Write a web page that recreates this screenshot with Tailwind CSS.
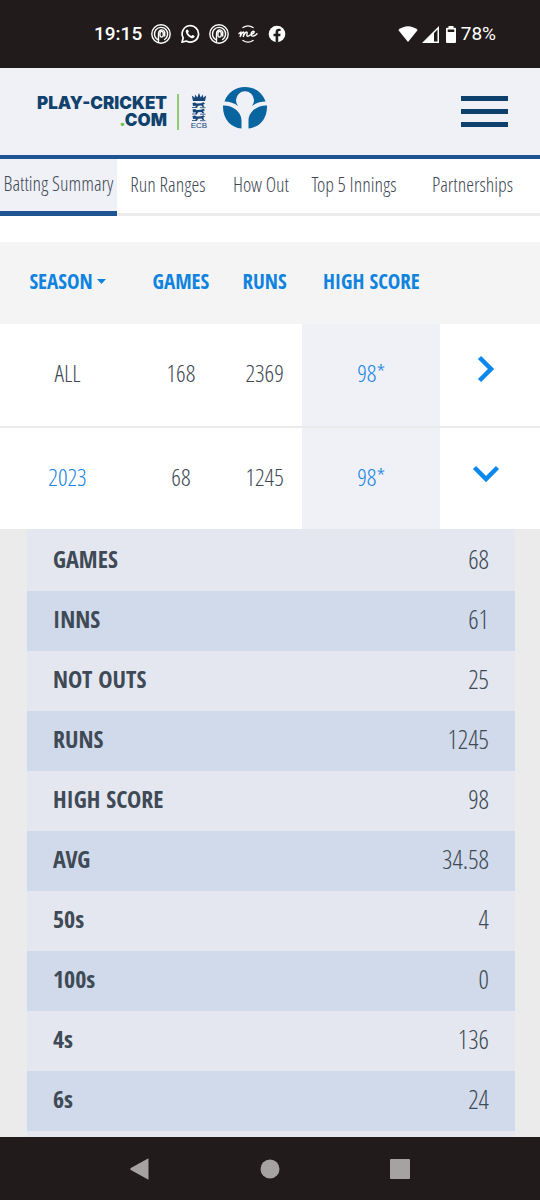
<!DOCTYPE html>
<html lang="en">
<head>
    <meta charset="UTF-8">
    <meta name="viewport" content="width=device-width, initial-scale=1.0">
    <title>Batting Summary - Play-Cricket</title>
    <script src="https://cdn.jsdelivr.net/npm/@tailwindcss/browser@4"></script>
</head>
<body class="min-h-screen flex flex-col bg-white text-[#3f4a56] font-light font-['Open_Sans_Condensed_Light','Open_Sans_Condensed',Lato,sans-serif]">

    <!-- Phone status bar -->
    <div class="h-[68px] shrink-0 bg-[#211b1b] text-white flex items-center justify-between pl-[94px] pr-11 font-normal font-['Roboto',sans-serif]">
        <div class="flex items-center gap-[9px]">
            <span class="text-[19px] font-medium">19:15</span>
            <svg class="w-5 h-5" viewBox="0 0 20 20" fill="none" stroke="currentColor" stroke-width="1.4" stroke-linecap="round">
                <circle cx="10" cy="10" r="9.2"/>
                <path d="M6.6 15.6A6.6 6.6 0 1 1 13.6 15.5"/>
                <path d="M7.5 17.5V9.5a3.3 4 0 0 1 6.2-1.5v4"/>
                <ellipse cx="10.6" cy="10.2" rx="1.7" ry="2.9"/>
            </svg>
            <svg class="w-5 h-5" viewBox="0 0 20 20">
                <path d="M2 18.2l1.2-4.3A8.2 8.2 0 1 1 6.3 17z" fill="none" stroke="currentColor" stroke-width="1.7" stroke-linejoin="round"/>
                <path d="M7.3 5.4c-.8 0-1.7.9-1.5 2.3.5 3 3.3 5.8 6.3 6.5 1.3.2 2.5-.7 2.6-1.9 0-.4-1.9-1.4-2.3-1.3-.4.1-.8 1-1.2 1-.9-.2-2.9-2-3.2-3 0-.4.8-.8.8-1.2 0-.5-.8-2.4-1.5-2.4z" fill="currentColor"/>
            </svg>
            <svg class="w-5 h-5" viewBox="0 0 20 20" fill="none" stroke="currentColor" stroke-width="1.4" stroke-linecap="round">
                <circle cx="10" cy="10" r="9.2"/>
                <path d="M6.6 15.6A6.6 6.6 0 1 1 13.6 15.5"/>
                <path d="M7.5 17.5V9.5a3.3 4 0 0 1 6.2-1.5v4"/>
                <ellipse cx="10.6" cy="10.2" rx="1.7" ry="2.9"/>
            </svg>
            <svg class="w-5 h-5" viewBox="0 0 20 20" fill="none" stroke="currentColor" stroke-width="1.4" stroke-linecap="round" stroke-linejoin="round">
                <path d="M5 3.5Q10 .2 15 3.5M5 16.5q5 3.3 10 0"/>
                <path d="M1 9.5l2-1.5-.8 4.5C3.5 9.5 5 7.5 5.8 8.2c.7.7-.3 2.8-.5 4.2C6.5 9.5 8 7.5 9 8.2c.8.7-1 3.6.2 4 1.3.4 3-1.2 4.3-2.2 1.5-.3 3-1.3 2.6-2.4-.5-1-3 .2-3 2.5 0 3 3.5 2.4 5.9-.3"/>
            </svg>
            <svg class="w-5 h-5" viewBox="0 0 20 20">
                <circle cx="10" cy="10" r="8.3" fill="currentColor"/>
                <path d="M8.6 18.5v-6.2H6.5V9.8h2.1V8c0-2.2 1.3-3.3 3.2-3.3l1.8.1V7h-1.1c-1 0-1.3.5-1.3 1.2v1.6h2.4l-.4 2.5h-2v6.2z" fill="#211b1b"/>
            </svg>
        </div>
        <div class="flex items-center gap-1">
            <svg class="w-5 h-4" viewBox="0 0 20 16" fill="currentColor"><path d="M10 16L.3 4Q10-3.5 19.7 4z"/></svg>
            <svg class="w-[17px] h-[17px]" viewBox="0 0 17 17" fill="currentColor"><path fill-rule="evenodd" d="M0 17L17 0v17zM12 7v8.5h3.5V3.5z"/></svg>
            <svg class="w-3 h-[17px] ml-[2px]" viewBox="0 0 12 17" fill="currentColor"><path fill-rule="evenodd" d="M3.5 0h5v1.7H10a1 1 0 0 1 1 1V16a1 1 0 0 1-1 1H2a1 1 0 0 1-1-1V2.7a1 1 0 0 1 1-1h1.5zM2.7 3.5V6h6.6V3.5z"/></svg>
            <span class="text-[19px]">78%</span>
        </div>
    </div>

    <header class="h-[91px] shrink-0 bg-[#eff1f7] border-b-4 border-[#1f5493] flex items-center justify-between pl-[37px] pr-8">
        <a href="#" class="flex items-center" aria-label="Play-Cricket home">
            <span class="whitespace-nowrap font-['Inter',sans-serif] font-black text-[17px] leading-[17px] text-right text-[#11426d]">PLAY-CRICKET<br><span class="text-[#6cc04a]">.</span>COM</span>
            <span class="w-[2px] h-9 bg-[#8ace6e] ml-[10px] mr-[11px]"></span>
            <!-- ECB lions -->
            <span class="flex flex-col items-center w-[18px] text-[#174577]">
                <svg class="w-4 h-[29px]" viewBox="0 0 16 29" fill="currentColor">
                    <path d="M2 8L.8 2.5l3 2.3L4 1.5l2.3 3L8 0l1.7 4.5 2.3-3 .2 3.3 3-2.3L14 8z"/>
                    <g id="lion">
                        <path d="M1.5 10l2.5-.6 1.7 1.2 4.3-.3 2.5-1 1.5 1.5-1.8.8 1 2.5-1.9-.3-.8-1.3-3.5.2-1 2.1-1.7-.2.5-1.8-2.8.2z"/>
                        <path d="M1 14.5h5M9 14.7h5.5" stroke="currentColor" stroke-width=".8"/>
                    </g>
                    <use href="#lion" y="6.5"/>
                    <use href="#lion" y="13"/>
                </svg>
                <span class="font-['Liberation_Sans',sans-serif] font-normal text-[8px] leading-[8px]">ECB</span>
            </span>
            <svg class="w-[46px] h-[44px] ml-[14px] mb-2" viewBox="0 0 46 44">
                <path d="M2.5 15.5C5.5 6.5 13.5 1 23 1s17.5 5.5 20.5 14.5c-5 0-10 1.5-13.5 4.5a9 9 0 1 0-14 0c-3.5-3-8.5-4.5-13.5-4.5z" fill="#08659f"/>
                <circle cx="23" cy="13.5" r="7.3" fill="#eff1f7"/>
                <path d="M1 19.5c9.500-.3 18.500 6 18.500 15v8C9 41.500.5 33 1 19.500zM45 19.500c-9.500-.3-18.500 6-18.500 15v8C37 41.500 45.500 33 45 19.500z" fill="#08659f"/>
            </svg>
        </a>
        <button class="flex flex-col gap-2 w-[47px]" aria-label="Menu">
            <span class="w-full h-[5px] bg-[#0d406b]"></span>
            <span class="w-full h-[5px] bg-[#0d406b]"></span>
            <span class="w-full h-[5px] bg-[#0d406b]"></span>
        </button>
    </header>

    <nav class="h-[57px] shrink-0 mb-[26px] grid grid-cols-[117fr_102fr_84fr_102fr_135fr] text-xl whitespace-nowrap text-center">
        <a href="#" class="flex items-center justify-center pb-[2px] bg-[#eff1f7] border-b-5 border-[#1f5493]">Batting Summary</a>
        <a href="#" class="flex items-center justify-center pb-[2px] border-b-3 border-[#ebebeb]">Run Ranges</a>
        <a href="#" class="flex items-center justify-center pb-[2px] border-b-3 border-[#ebebeb]">How Out</a>
        <a href="#" class="flex items-center justify-center pb-[2px] border-b-3 border-[#ebebeb]">Top 5 Innings</a>
        <a href="#" class="flex items-center justify-center pb-[2px] border-b-3 border-[#ebebeb]">Partnerships</a>
    </nav>

    <main class="flex-1 flex flex-col bg-[#ebebeb]">
        <table class="w-full table-fixed text-center text-2xl bg-white">
            <colgroup>
                <col class="w-[25%]">
                <col class="w-[17%]">
                <col class="w-[14%]">
                <col class="w-[25.5%]">
                <col>
            </colgroup>
            <thead class="font-['Open_Sans_Condensed',Lato,sans-serif]">
                <tr class="h-[82px] bg-[#f4f4f4] text-[#0f83e0] text-[21px]">
                    <th class="pb-1"><button class="inline-flex items-center gap-1 font-bold">SEASON<svg class="w-[9px] h-[5px]" viewBox="0 0 9 5" fill="currentColor"><path d="M0 0h9L4.5 5z"/></svg></button></th>
                    <th class="pb-1">GAMES</th>
                    <th class="pb-1">RUNS</th>
                    <th class="pb-1">HIGH SCORE</th>
                    <th></th>
                </tr>
            </thead>
            <tbody>
                <tr class="h-[103px] border-b-2 border-[#ebebeb]">
                    <td class="pb-1">ALL</td>
                    <td class="pb-1">168</td>
                    <td class="pb-1">2369</td>
                    <td class="pb-1 bg-[#eff1f7] text-[#1a86e3]">98*</td>
                    <td class="pr-2 pb-4"><button class="align-middle" aria-label="Show all seasons"><svg class="w-7 h-7" viewBox="0 0 28 28" fill="none" stroke="#0b87ee" stroke-width="4.5"><path d="M7.5 2.5L19 14 7.5 25.5"/></svg></button></td>
                </tr>
                <tr class="h-[102px]">
                    <td class="pb-1 text-[#1a86e3]">2023</td>
                    <td class="pb-1">68</td>
                    <td class="pb-1">1245</td>
                    <td class="pb-1 bg-[#eff1f7] text-[#1a86e3]">98*</td>
                    <td class="pr-2 pb-4"><button class="align-middle" aria-label="Hide 2023"><svg class="w-7 h-7" viewBox="0 0 28 28" fill="none" stroke="#0b87ee" stroke-width="4.5"><path d="M2.5 8.5L14 20 25.5 8.5"/></svg></button></td>
                </tr>
            </tbody>
        </table>

        <!-- 2023 details -->
        <div class="flex-1 ml-[27px] mr-[25px] pt-[2px] bg-[#e4e7f0]">
            <table class="w-full text-[26px]">
                <tbody>
                    <tr class="h-[60px]">
                        <th class="pl-[26px] pb-1 text-left text-2xl font-['Open_Sans_Condensed',Lato,sans-serif]">GAMES</th>
                        <td class="pr-[26px] pb-1 text-right">68</td>
                    </tr>
                    <tr class="h-[60px] bg-[#d0daea]">
                        <th class="pl-[26px] pb-1 text-left text-2xl font-['Open_Sans_Condensed',Lato,sans-serif]">INNS</th>
                        <td class="pr-[26px] pb-1 text-right">61</td>
                    </tr>
                    <tr class="h-[60px]">
                        <th class="pl-[26px] pb-1 text-left text-2xl font-['Open_Sans_Condensed',Lato,sans-serif]">NOT OUTS</th>
                        <td class="pr-[26px] pb-1 text-right">25</td>
                    </tr>
                    <tr class="h-[60px] bg-[#d0daea]">
                        <th class="pl-[26px] pb-1 text-left text-2xl font-['Open_Sans_Condensed',Lato,sans-serif]">RUNS</th>
                        <td class="pr-[26px] pb-1 text-right">1245</td>
                    </tr>
                    <tr class="h-[60px]">
                        <th class="pl-[26px] pb-1 text-left text-2xl font-['Open_Sans_Condensed',Lato,sans-serif]">HIGH SCORE</th>
                        <td class="pr-[26px] pb-1 text-right">98</td>
                    </tr>
                    <tr class="h-[60px] bg-[#d0daea]">
                        <th class="pl-[26px] pb-1 text-left text-2xl font-['Open_Sans_Condensed',Lato,sans-serif]">AVG</th>
                        <td class="pr-[26px] pb-1 text-right">34.58</td>
                    </tr>
                    <tr class="h-[60px]">
                        <th class="pl-[26px] pb-1 text-left text-2xl font-['Open_Sans_Condensed',Lato,sans-serif]">50s</th>
                        <td class="pr-[26px] pb-1 text-right">4</td>
                    </tr>
                    <tr class="h-[60px] bg-[#d0daea]">
                        <th class="pl-[26px] pb-1 text-left text-2xl font-['Open_Sans_Condensed',Lato,sans-serif]">100s</th>
                        <td class="pr-[26px] pb-1 text-right">0</td>
                    </tr>
                    <tr class="h-[60px]">
                        <th class="pl-[26px] pb-1 text-left text-2xl font-['Open_Sans_Condensed',Lato,sans-serif]">4s</th>
                        <td class="pr-[26px] pb-1 text-right">136</td>
                    </tr>
                    <tr class="h-[60px] bg-[#d0daea]">
                        <th class="pl-[26px] pb-1 text-left text-2xl font-['Open_Sans_Condensed',Lato,sans-serif]">6s</th>
                        <td class="pr-[26px] pb-1 text-right">24</td>
                    </tr>
                </tbody>
            </table>
        </div>
    </main>

    <!-- Phone navigation bar -->
    <footer class="h-[63px] shrink-0 bg-[#211b1b] text-[#a5a2a1] flex items-center justify-between px-[130px]">
        <button aria-label="Back"><svg class="w-5 h-[22px]" viewBox="0 0 20 22" fill="currentColor"><path d="M18.5.3v21.4L.8 12q-1-1 0-2z"/></svg></button>
        <button aria-label="Home"><svg class="w-5 h-5" viewBox="0 0 20 20" fill="currentColor"><circle cx="10" cy="10" r="9.5"/></svg></button>
        <button aria-label="Recent apps"><svg class="w-5 h-5" viewBox="0 0 20 20" fill="currentColor"><rect width="20" height="20" rx="1"/></svg></button>
    </footer>
</body>
</html>
